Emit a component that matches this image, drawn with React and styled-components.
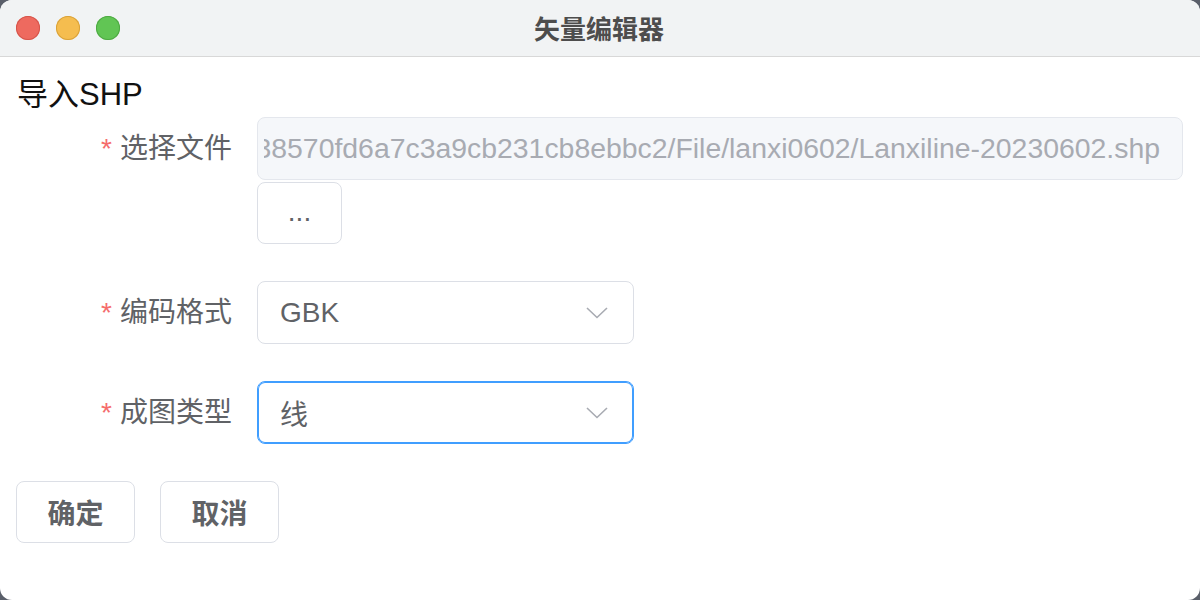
import styled, { createGlobalStyle } from "styled-components";

const GlobalStyle = createGlobalStyle`
    html, body {
        margin: 0;
        padding: 0;
        background: #5a5f6a;
    }
    * {
        box-sizing: border-box;
    }
`;

const font = `"Liberation Sans", "Noto Sans CJK SC", sans-serif`;

const lights = [
    { bg: "#ee6a5f", border: "#d5554b" },
    { bg: "#f5bd4f", border: "#d9a23a" },
    { bg: "#61c554", border: "#4ea943" },
];

function Chevron() {
    return (
        <svg width="22" height="12" viewBox="0 0 22 12">
            <path d="M1 1 L11 10.5 L21 1" fill="none" stroke="#a8abb2" strokeWidth="1.6" />
        </svg>
    );
}

export default function App() {
    const path =
        "C:/Users/Admin/AppData/Roaming/vector-editor/upload/5e2d138570fd6a7c3a9cb231cb8ebbc2/File/lanxi0602/Lanxiline-20230602.shp";

    return (
        <Window>
            <GlobalStyle />
            <TitleBar>
                <Lights>
                    {lights.map((l, i) => (
                        <Light key={i} $bg={l.bg} $border={l.border} />
                    ))}
                </Lights>
                <Title>矢量编辑器</Title>
                <span />
            </TitleBar>
            <Content>
                <Heading>导入SHP</Heading>
                <FormItem>
                    <Label>选择文件</Label>
                    <Field>
                        <PathInput>
                            <PathText>{path}</PathText>
                        </PathInput>
                        <BrowseButton>...</BrowseButton>
                    </Field>
                </FormItem>
                <FormItem>
                    <Label>编码格式</Label>
                    <Field>
                        <Select>
                            <span>GBK</span>
                            <Chevron />
                        </Select>
                    </Field>
                </FormItem>
                <FormItem>
                    <Label>成图类型</Label>
                    <Field>
                        <Select $focused>
                            <span>线</span>
                            <Chevron />
                        </Select>
                    </Field>
                </FormItem>
                <Actions>
                    <Button>确定</Button>
                    <Button>取消</Button>
                </Actions>
            </Content>
        </Window>
    );
}

const Window = styled.div`
    width: 1200px;
    height: 600px;
    background: #ffffff;
    border-radius: 12px;
    overflow: hidden;
    font-family: ${font};
`;
const TitleBar = styled.div`
    height: 57px;
    background: #f1f3f4;
    border-bottom: 1px solid #d8d8d8;
    display: grid;
    grid-template-columns: 1fr auto 1fr;
    align-items: center;
`;
const Lights = styled.div`
    display: flex;
    gap: 16px;
    padding-left: 16px;
`;
const Light = styled.div`
    width: 24px;
    height: 24px;
    border-radius: 50%;
    background: ${(p) => p.$bg};
    box-shadow: inset 0 0 0 1px ${(p) => p.$border};
`;
const Title = styled.div`
    font-family: "Noto Sans CJK SC", sans-serif;
    font-size: 26px;
    font-weight: 700;
    color: #4d4d4d;
    line-height: 1;
    margin-right: 2px;
`;
const Content = styled.div`
    padding: 18px 16px 0;
`;
const Heading = styled.div`
    font-size: 31px;
    line-height: 40px;
    color: #111;
    padding-left: 1px;
    margin-bottom: 2px;
`;
const FormItem = styled.div`
    display: flex;
    margin-bottom: 37px;
`;
const Label = styled.div`
    width: 241px;
    flex-shrink: 0;
    height: 63px;
    line-height: 63px;
    text-align: right;
    padding-right: 25px;
    font-size: 28px;
    color: #606266;

    &::before {
        content: "*";
        color: #f56c6c;
        margin-right: 8px;
    }
`;
const Field = styled.div`
    display: flex;
    flex-direction: column;
    align-items: flex-start;
    gap: 2px;
`;
const PathInput = styled.div`
    width: 926px;
    height: 63px;
    border: 1px solid #e4e7ed;
    border-radius: 8px;
    background: #f5f7fa;
    padding: 0 22px 0 6px;
    display: flex;
    align-items: center;
`;
const PathText = styled.div`
    flex: 1;
    overflow: hidden;
    white-space: nowrap;
    display: flex;
    justify-content: flex-end;
    font-size: 28.4px;
    color: #a8abb2;
`;
const BrowseButton = styled.button`
    width: 85px;
    height: 62px;
    border: 1px solid #dcdfe6;
    border-radius: 8px;
    background: #fff;
    font-family: ${font};
    font-size: 28px;
    color: #606266;
    padding: 0 0 2px;
`;
const Select = styled.div`
    width: 377px;
    height: 63px;
    border: 1px solid ${(p) => (p.$focused ? "#409eff" : "#dcdfe6")};
    box-shadow: ${(p) => (p.$focused ? "0 0 0 1px #409eff inset" : "none")};
    border-radius: 8px;
    background: #fff;
    display: flex;
    align-items: center;
    justify-content: space-between;
    padding: 0 25px 0 22px;
    font-size: 28px;
    color: #606266;
`;
const Actions = styled.div`
    display: flex;
    gap: 25px;
    margin-top: 1px;
`;
const Button = styled.button`
    width: 119px;
    height: 62px;
    border: 1px solid #dcdfe6;
    border-radius: 8px;
    background: #fff;
    font-family: "Noto Sans CJK SC", sans-serif;
    font-size: 28px;
    font-weight: 700;
    color: #606266;
    padding: 0;
`;
